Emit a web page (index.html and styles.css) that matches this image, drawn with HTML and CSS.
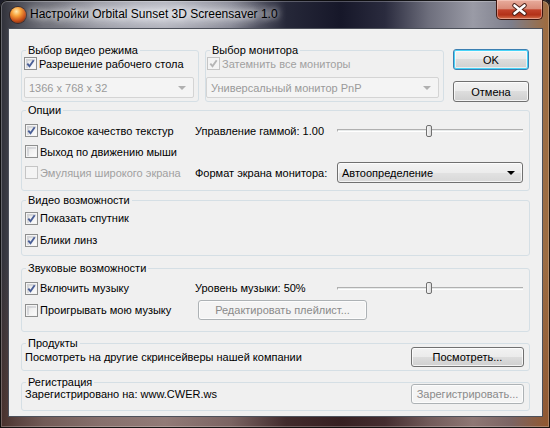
FILE: index.html
```html
<!DOCTYPE html>
<html lang="ru">
<head>
    <meta charset="UTF-8">
    <title>Настройки Orbital Sunset 3D Screensaver 1.0</title>
    <link rel="stylesheet" href="styles.css">
</head>
<body>
    <div class="window">
        <div class="titlebar">
            <span class="app-icon"></span>
            <span class="caption">Настройки Orbital Sunset 3D Screensaver 1.0</span>
            <button class="close-btn" title="Закрыть">
                <svg width="45" height="19" viewBox="0 0 45 19">
                    <path d="M17.5 5.5l10 8m0-8l-10 8" stroke="#4a2119" stroke-width="4.6" stroke-linecap="round"/>
                    <path d="M17.5 5.5l10 8m0-8l-10 8" stroke="#ffffff" stroke-width="2.6" stroke-linecap="round"/>
                </svg>
            </button>
        </div>

        <div class="client">
            <div class="top-row">
                <fieldset class="group video-mode">
                    <legend>Выбор видео режима</legend>
                    <label class="check">
                        <span class="box"><svg class="tick" viewBox="0 0 9 9"><path d="M1.3 4.6l2.2 2.6 4.2-6"/></svg></span>
                        Разрешение рабочего стола
                    </label>
                    <div class="combo disabled">1366 x 768 x 32<span class="arrow"></span></div>
                </fieldset>

                <fieldset class="group monitor">
                    <legend>Выбор монитора</legend>
                    <label class="check disabled">
                        <span class="box"><svg class="tick" viewBox="0 0 9 9"><path d="M1.3 4.6l2.2 2.6 4.2-6"/></svg></span>
                        Затемнить все мониторы
                    </label>
                    <div class="combo disabled">Универсальный монитор PnP<span class="arrow"></span></div>
                </fieldset>

                <div class="dialog-buttons">
                    <button class="btn default">OK</button>
                    <button class="btn">Отмена</button>
                </div>
            </div>

            <fieldset class="group options">
                <legend>Опции</legend>
                <label class="check">
                    <span class="box"><svg class="tick" viewBox="0 0 9 9"><path d="M1.3 4.6l2.2 2.6 4.2-6"/></svg></span>
                    Высокое качество текстур
                </label>
                <span class="field-label">Управление гаммой: 1.00</span>
                <div class="slider"><span class="track"></span><span class="thumb" style="left: 49.5%"></span></div>

                <label class="check">
                    <span class="box"></span>
                    Выход по движению мыши
                </label>
                <span></span>
                <span></span>

                <label class="check disabled">
                    <span class="box"></span>
                    Эмуляция широкого экрана
                </label>
                <span class="field-label">Формат экрана монитора:</span>
                <div class="combo">Автоопределение<span class="arrow"></span></div>
            </fieldset>

            <fieldset class="group video">
                <legend>Видео возможности</legend>
                <label class="check">
                    <span class="box"><svg class="tick" viewBox="0 0 9 9"><path d="M1.3 4.6l2.2 2.6 4.2-6"/></svg></span>
                    Показать спутник
                </label>
                <label class="check">
                    <span class="box"><svg class="tick" viewBox="0 0 9 9"><path d="M1.3 4.6l2.2 2.6 4.2-6"/></svg></span>
                    Блики линз
                </label>
            </fieldset>

            <fieldset class="group sound">
                <legend>Звуковые возможности</legend>
                <label class="check">
                    <span class="box"><svg class="tick" viewBox="0 0 9 9"><path d="M1.3 4.6l2.2 2.6 4.2-6"/></svg></span>
                    Включить музыку
                </label>
                <span class="field-label">Уровень музыки: 50%</span>
                <div class="slider"><span class="track"></span><span class="thumb" style="left: 49.5%"></span></div>

                <label class="check">
                    <span class="box"></span>
                    Проигрывать мою музыку
                </label>
                <button class="btn playlist" disabled>Редактировать плейлист...</button>
            </fieldset>

            <fieldset class="group line-group products">
                <legend>Продукты</legend>
                <div class="line">
                    <span>Посмотреть на другие скринсейверы нашей компании</span>
                    <button class="btn wide">Посмотреть...</button>
                </div>
            </fieldset>

            <fieldset class="group line-group register">
                <legend>Регистрация</legend>
                <div class="line">
                    <span>Зарегистрировано на: www.CWER.ws</span>
                    <button class="btn wide" disabled>Зарегистрировать...</button>
                </div>
            </fieldset>
        </div>
    </div>
</body>
</html>
```

FILE: styles.css
```css
* {
    box-sizing: border-box;
}

body {
    margin: 0;
    background: #1c1d28;
    font-family: "Liberation Sans", Arial, sans-serif;
    font-size: 11px;
    color: #000;
}

/* окно с рамкой Aero */
.window {
    width: 550px;
    height: 428px;
    display: flex;
    flex-direction: column;
    padding: 0 7px 11px 8px;
    border-radius: 7px 7px 0 0;
    background:
        radial-gradient(ellipse 120px 22px at 160px 14px, rgba(220, 222, 230, 0.85), rgba(220, 222, 230, 0) 100%),
        linear-gradient(180deg, rgba(0, 0, 0, 0) 60%, rgba(120, 50, 20, 0.35) 100%),
        linear-gradient(90deg, #2e2f37 0%, #4a4b55 3%, #6f7079 8%, #8e8f99 18%, #9fa0aa 30%, #7c7d8a 42%, #262839 52%, #161729 62%, #2a2b3e 70%, #6e6f7d 78%, #9a9ba6 86%, #7d7e8b 93%, #a06a3a 100%);
    box-shadow: inset 0 0 0 1px rgba(0, 0, 0, 0.85), inset 0 0 0 2px rgba(255, 255, 255, 0.25);
}

.titlebar {
    height: 28px;
    display: flex;
    align-items: center;
}

.app-icon {
    width: 16px;
    height: 16px;
    margin: 1px 0 0 2px;
    border-radius: 50%;
    background: radial-gradient(circle at 40% 28%, #ffe9b0 0%, #f8a23a 30%, #c9501a 62%, #4b1706 100%);
    box-shadow: 0 0 0 1px rgba(40, 10, 0, 0.5);
}

.caption {
    margin-left: 4px;
    font-size: 12px;
    color: #000;
    text-shadow: 0 0 6px #fff, 0 0 10px rgba(255, 255, 255, 0.8);
}

.close-btn {
    align-self: flex-start;
    margin-left: auto;
    width: 47px;
    height: 20px;
    padding: 0;
    border: 1px solid #3e1710;
    border-top: none;
    border-radius: 0 0 5px 5px;
    background: linear-gradient(180deg, #e8ac9c 0%, #da8c79 45%, #c2432b 52%, #b33118 78%, #d4704b 100%);
    box-shadow: inset 0 0 0 1px rgba(255, 220, 210, 0.45);
}

.close-btn svg {
    display: block;
}

.client {
    flex: 1;
    background: #f0f0f0;
    border: 1px solid #4c505a;
    padding: 14px 12px 0 12px;
}

/* группы */
.group {
    margin: 0;
    padding: 0 6px 0 3px;
    border: 1px solid #d5dfe5;
    border-radius: 3px;
    min-width: 0;
}

.group legend {
    padding: 0 2px;
    margin-left: 1px;
    line-height: 14px;
}

.top-row {
    display: flex;
    align-items: flex-start;
}

.video-mode {
    width: 178px;
    padding: 0 4px 3px 2px;
}

.video-mode legend {
    margin-left: 2px;
}

.monitor {
    width: 239px;
    margin-left: 6px;
    padding: 0 4px 3px 0;
}

.monitor legend {
    margin-left: 4px;
}

.monitor .check {
    padding-left: 1px;
}

.top-row .check {
    height: 13px;
}

.top-row .combo {
    margin-top: 7px;
}

.dialog-buttons {
    margin-left: 9px;
    padding-top: 6px;
    display: flex;
    flex-direction: column;
    gap: 11px;
}

.dialog-buttons .btn {
    width: 76px;
    height: 21px;
}

.options,
.sound {
    display: grid;
    grid-template-columns: 170px 142px 186px;
    align-items: center;
}

.options {
    margin-top: 1px;
    padding: 3px 6px 7px 3px;
    grid-auto-rows: 21px;
}

.video {
    margin-top: 2px;
    padding: 0 6px 4px 3px;
}

.video .check {
    height: 22px;
}

.sound {
    margin-top: 5px;
    padding: 2px 6px 10px 3px;
    grid-auto-rows: 22px;
}

.line-group {
    margin-top: 4px;
    padding: 0 5px 3px 3px;
}

.register {
    padding-bottom: 6px;
}

.line {
    display: flex;
    align-items: center;
    justify-content: space-between;
    height: 20px;
    margin-top: -3px;
}

.register .line {
    margin-top: -5px;
}

/* флажки */
.check {
    display: flex;
    align-items: center;
    gap: 2px;
    white-space: nowrap;
}

.box {
    width: 13px;
    height: 13px;
    flex: none;
    border: 1px solid #8e8f8f;
    background: linear-gradient(135deg, #dcdcdc 0%, #f0f0f0 45%, #fdfdfd 100%);
    box-shadow: inset 0 0 0 1px #f4f4f4, inset 1px 1px 0 2px rgba(174, 179, 185, 0.35);
    display: flex;
    align-items: center;
    justify-content: center;
}

.tick {
    width: 9px;
    height: 9px;
}

.tick path {
    fill: none;
    stroke: #4a5f97;
    stroke-width: 1.9;
}

.check.disabled {
    color: #a0a0a0;
}

.check.disabled .box {
    border-color: #c5c5c5;
    background: #f4f4f4;
    box-shadow: none;
}

.check.disabled .tick path {
    stroke: #b5b5b5;
}

.field-label {
    white-space: nowrap;
}

/* выпадающие списки */
.combo {
    position: relative;
    height: 21px;
    padding: 0 4px;
    display: flex;
    align-items: center;
    border: 1px solid #707070;
    border-radius: 3px;
    background: linear-gradient(180deg, #f4f4f4 0%, #ececec 50%, #e2e2e2 51%, #d8d8d8 100%);
    box-shadow: inset 0 0 0 1px rgba(255, 255, 255, 0.7);
}

.combo.disabled {
    color: #9a9a9a;
    border-color: #d4d4d4;
    border-radius: 2px;
    background: #f4f4f4;
    box-shadow: none;
}

.combo .arrow {
    position: absolute;
    right: 7px;
    top: 8px;
    border-left: 4px solid transparent;
    border-right: 4px solid transparent;
    border-top: 4px solid #000;
}

.combo.disabled .arrow {
    border-top-color: #b0b0b0;
}

/* ползунки */
.slider {
    position: relative;
    height: 14px;
    display: flex;
    align-items: center;
}

.track {
    flex: 1;
    height: 3px;
    border-top: 1px solid #b0b0b0;
    border-bottom: 1px solid #fff;
    border-left: 1px solid #b0b0b0;
    background: #e7eaea;
}

.thumb {
    position: absolute;
    top: 1px;
    width: 6px;
    height: 12px;
    margin-left: -3px;
    border: 1px solid #707070;
    border-radius: 2px;
    background: linear-gradient(90deg, #f6f6f6, #dcdcdc);
}

/* кнопки */
.btn {
    font-family: inherit;
    font-size: 11px;
    color: #000;
    height: 20px;
    padding: 0;
    border: 1px solid #707070;
    border-radius: 3px;
    background: linear-gradient(180deg, #f2f2f2 0%, #ebebeb 49%, #dddddd 50%, #cfcfcf 100%);
    box-shadow: inset 0 0 0 1px rgba(255, 255, 255, 0.75);
}

.btn.default {
    border-color: #3c7fb1;
    box-shadow: inset 0 0 0 1px #48d3f8, inset 0 0 0 2px rgba(255, 255, 255, 0.6);
}

.btn:disabled {
    color: #8a8a8a;
    border-color: #adb2b5;
    background: #f4f4f4;
    box-shadow: inset 0 0 0 1px #fcfcfc;
}

.playlist {
    grid-column: 2 / 4;
    width: 169px;
    margin-left: 3px;
}

.btn.wide {
    width: 113px;
}
```
